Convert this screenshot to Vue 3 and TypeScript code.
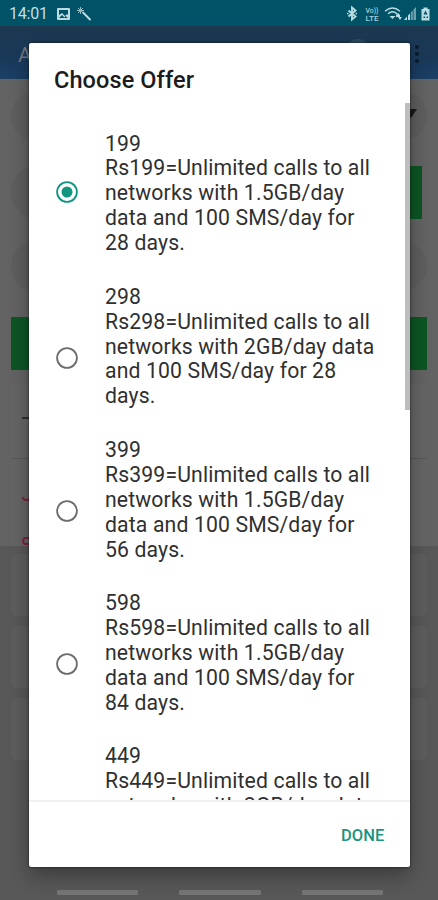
<script setup lang="ts">
import { ref } from 'vue'

interface Offer {
  price: number
  lines: string[]
}

const offers: Offer[] = [
  { price: 199, lines: ['networks with 1.5GB/day', 'data and 100 SMS/day for', '28 days.'] },
  { price: 298, lines: ['networks with 2GB/day data', 'and 100 SMS/day for 28', 'days.'] },
  { price: 399, lines: ['networks with 1.5GB/day', 'data and 100 SMS/day for', '56 days.'] },
  { price: 598, lines: ['networks with 1.5GB/day', 'data and 100 SMS/day for', '84 days.'] },
  { price: 449, lines: ['networks with 2GB/day data'] },
]

const selected = ref(199)
</script>

<template>
  <div class="screen">
    <header class="status">
      <span class="clock">14:01</span>
      <svg class="left-icons" width="38" height="16" viewBox="0 0 38 16">
        <path fill="#b9dbe2" fill-rule="evenodd" d="M2 2h11q1 0 1 1v10q0 1-1 1H2q-1 0-1-1V3q0-1 1-1zm1 2v5l3-2 3 3 2-2 1 1V4zm0 8h9L9.500 10 8.500 11.500 6 9z" />
        <path stroke="#b9dbe2" stroke-width="2" stroke-linecap="round" d="M27 6.500l7 7" />
        <path stroke="#8fbdc8" stroke-width="1" fill="none" d="M24.500 1v7M21 4.500h7M22 2l5 5M27 2l-5 5" />
      </svg>
      <svg class="right-icons" width="90" height="18" viewBox="0 0 90 18">
        <g fill="none" stroke="#b9dbe2">
          <path stroke-width="1.900" d="M4.500 5.500l7 6L8 14.500v-12l3.500 3-7 6" />
          <path stroke-width="1.300" d="M3 8.500h1.500M11.500 8.500H13" />
          <path stroke-width="1.500" d="M41 6.200q7.500-6.500 15 0M44 8.800q4.500-4 9 0" />
        </g>
        <text x="21.500" y="7.800" textLength="13" lengthAdjust="spacingAndGlyphs" class="volte">Vo))</text>
        <text x="21.500" y="15.800" textLength="13" lengthAdjust="spacingAndGlyphs" class="volte">LTE</text>
        <path fill="#b9dbe2" d="M45.500 11h6L48.500 14zM52 10l2-2 2 2v2h-4zM54 12h4l-2 3z" />
        <path fill="#6fa0ad" d="M72 2v13h-2.500V4.500zM68.800 5.500V15h-2V7.500z" />
        <path fill="#b9dbe2" d="M66 8.500V15h-2v-4.500zM63 11.500V15h-3z" />
        <path fill="#b9dbe2" d="M79.500 2.500h4v1.500h2v11.500h-8V4h2z" />
        <path fill="#005266" d="M81.500 5.500l-2 4h4zM79.500 11.500H81v1.500h-1.500zM82.500 11.500H84v1.500h-1.500z" />
      </svg>
    </header>

    <div class="appbar">
      <span class="app-title">A</span>
      <span class="avatar"></span>
      <span class="dots"><i></i><i></i><i></i></span>
    </div>

    <main class="form">
      <div class="pill"><span class="caret"></span></div>
      <div class="field-row"><span class="search"></span></div>
      <div class="pill third"></div>
      <div class="submit"></div>
      <div class="panel"><span class="dash"></span></div>
      <div class="panel alerts"><span class="red tick"></span><span class="red loop"></span></div>
    </main>
    <section class="lower">
      <div class="card"></div>
      <div class="card"></div>
      <div class="card"></div>
    </section>
    <nav class="nav"><i></i><i></i><i></i></nav>

    <div class="dialog" role="dialog" aria-labelledby="dialog-title">
      <h1 id="dialog-title">Choose Offer</h1>
      <div class="list">
        <label v-for="offer in offers" :key="offer.price" class="offer" @click="selected = offer.price">
          <svg class="radio" :class="{ on: selected === offer.price }" width="24" height="24" viewBox="0 0 24 24">
            <circle cx="12" cy="12" r="9.900" fill="none" stroke="currentColor" stroke-width="1.800" />
            <circle v-if="selected === offer.price" cx="12" cy="12" r="5.500" fill="currentColor" />
          </svg>
          <span class="copy">
            <span>{{ offer.price }}</span>
            <span>Rs{{ offer.price }}=Unlimited calls to all</span>
            <span v-for="line in offer.lines" :key="line">{{ line }}</span>
          </span>
        </label>
        <span class="thumb"></span>
      </div>
      <footer class="actions"><button type="button">DONE</button></footer>
    </div>
  </div>
</template>

<style>
body {
  margin: 0;
}
</style>

<style scoped>
.screen {
  position: relative;
  box-sizing: border-box;
  width: 438px;
  height: 900px;
  overflow: hidden;
  display: flex;
  flex-direction: column;
  background: #585858;
  font-family: Roboto, "Liberation Sans", sans-serif;
}
.status {
  display: flex;
  align-items: center;
  flex: none;
  height: 26px;
  box-sizing: border-box;
  padding: 1px 4px 0 9px;
  background: #005266;
}
.clock {
  width: 47px;
  color: #c3dfe5;
  font-size: 16px;
  line-height: 24px;
  letter-spacing: -0.2px;
}
.right-icons {
  margin-left: auto;
}
.volte {
  fill: #a9d0d8;
  font-size: 8px;
  font-weight: 500;
}
.appbar {
  display: flex;
  align-items: center;
  flex: none;
  height: 53px;
  box-sizing: border-box;
  padding: 2px 19px 0 18px;
  background: linear-gradient(#1d3850, #1a3959 60%, #1b3f66);
}
.app-title {
  color: #6c7680;
  font-size: 21px;
  padding-top: 3px;
}
.avatar {
  width: 26px;
  height: 29px;
  margin-left: auto;
  border-radius: 50%;
  background: #2c4c5e;
}
.dots {
  display: flex;
  flex-direction: column;
  gap: 3px;
  margin-left: 44px;
}
.dots i {
  width: 4px;
  height: 4px;
  border-radius: 50%;
  background: #0b1e2e;
}
.form {
  display: flex;
  flex-direction: column;
  flex: none;
  height: 467px;
  box-sizing: border-box;
  padding: 12px 11px 0;
  background: #636363;
}
.pill {
  display: flex;
  flex: none;
  height: 50px;
  justify-content: flex-end;
  align-items: center;
  box-sizing: border-box;
  padding-right: 10px;
  border-radius: 25px;
  background: #5e5e5f;
}
.caret {
  border: 6px solid transparent;
  border-top: 9px solid #1a1a1a;
  border-bottom: 0;
  margin-bottom: 5px;
}
.field-row {
  display: flex;
  flex: none;
  justify-content: flex-end;
  height: 53px;
  margin: 25px 5px 0 0;
  border-radius: 26px 0 0 26px;
  background: #5e5e5f;
}
.search {
  width: 60px;
  background: #0d5524;
}
.third {
  margin-top: 22px;
}
.submit {
  flex: none;
  height: 53px;
  margin-top: 26px;
  background: #0d5524;
}
.panel {
  display: flex;
  flex: none;
  height: 74px;
  margin-top: 14px;
  padding: 0 11px;
  border-bottom: 1px solid #575757;
  background: #656565;
}
.dash {
  width: 14px;
  height: 2px;
  margin-top: 33px;
  background: #303030;
}
.alerts {
  flex-direction: column;
  height: 87px;
  margin-top: 0;
  border: 0;
}
.red {
  flex: none;
  box-sizing: border-box;
  border: 2px solid #78253a;
}
.tick {
  width: 9px;
  height: 4px;
  margin-top: 38px;
  border-top: 0;
  border-radius: 0 0 6px 6px;
}
.loop {
  width: 11px;
  height: 8px;
  margin-top: 36px;
  border-radius: 5px;
}
.lower {
  display: flex;
  flex-direction: column;
  gap: 10px;
  flex: none;
  padding: 8px 11px 0;
}
.card {
  height: 62px;
  border-radius: 6px;
  background: #5d5d5d;
}
.nav {
  display: flex;
  gap: 41px;
  margin-top: auto;
  padding: 0 55px 5px 57px;
}
.nav i {
  flex: 1;
  height: 5px;
  border-radius: 1px;
  background: #757575;
}
.dialog {
  position: absolute;
  left: 29px;
  top: 43px;
  width: 381px;
  height: 824px;
  display: flex;
  flex-direction: column;
  border-radius: 2px;
  background: #fff;
  box-shadow: 0 9px 20px rgba(0, 0, 0, 0.32), 0 0 3px rgba(0, 0, 0, 0.6);
}
h1 {
  flex: none;
  box-sizing: border-box;
  height: 60px;
  margin: 0;
  padding: 22px 0 0 25px;
  color: #1c1c1c;
  font-size: 23.500px;
  font-weight: 500;
  line-height: 30px;
  letter-spacing: 0.1px;
}
.list {
  position: relative;
  flex: none;
  box-sizing: border-box;
  height: 699px;
  padding-top: 28.500px;
  overflow: hidden;
  border-bottom: 2px solid #f0f0f0;
}
.offer {
  display: flex;
  align-items: flex-start;
  height: 153.200px;
  padding-left: 26px;
  gap: 26px;
}
.radio {
  flex: none;
  margin-top: 48.500px;
  color: #6c6c6c;
}
/* Later rows hang their control below the middle of the label. */
.offer:not(:first-child) .radio {
  margin-top: 61px;
}
.radio.on {
  color: #119681;
}
.copy {
  display: flex;
  flex-direction: column;
  color: #303030;
  font-size: 21.200px;
  line-height: 24.900px;
  letter-spacing: 0.14px;
  white-space: nowrap;
}
.thumb {
  position: absolute;
  top: 0;
  right: 0;
  width: 5px;
  height: 307px;
  background: #bdbdbd;
}
.actions {
  display: flex;
  flex: 1;
  align-items: center;
  justify-content: flex-end;
  padding: 2px 25.500px 0 0;
}
button {
  border: 0;
  padding: 0;
  background: none;
  color: #1b9480;
  font: 500 16.500px/20px Roboto, "Liberation Sans", sans-serif;
  letter-spacing: 0.1px;
}
</style>
